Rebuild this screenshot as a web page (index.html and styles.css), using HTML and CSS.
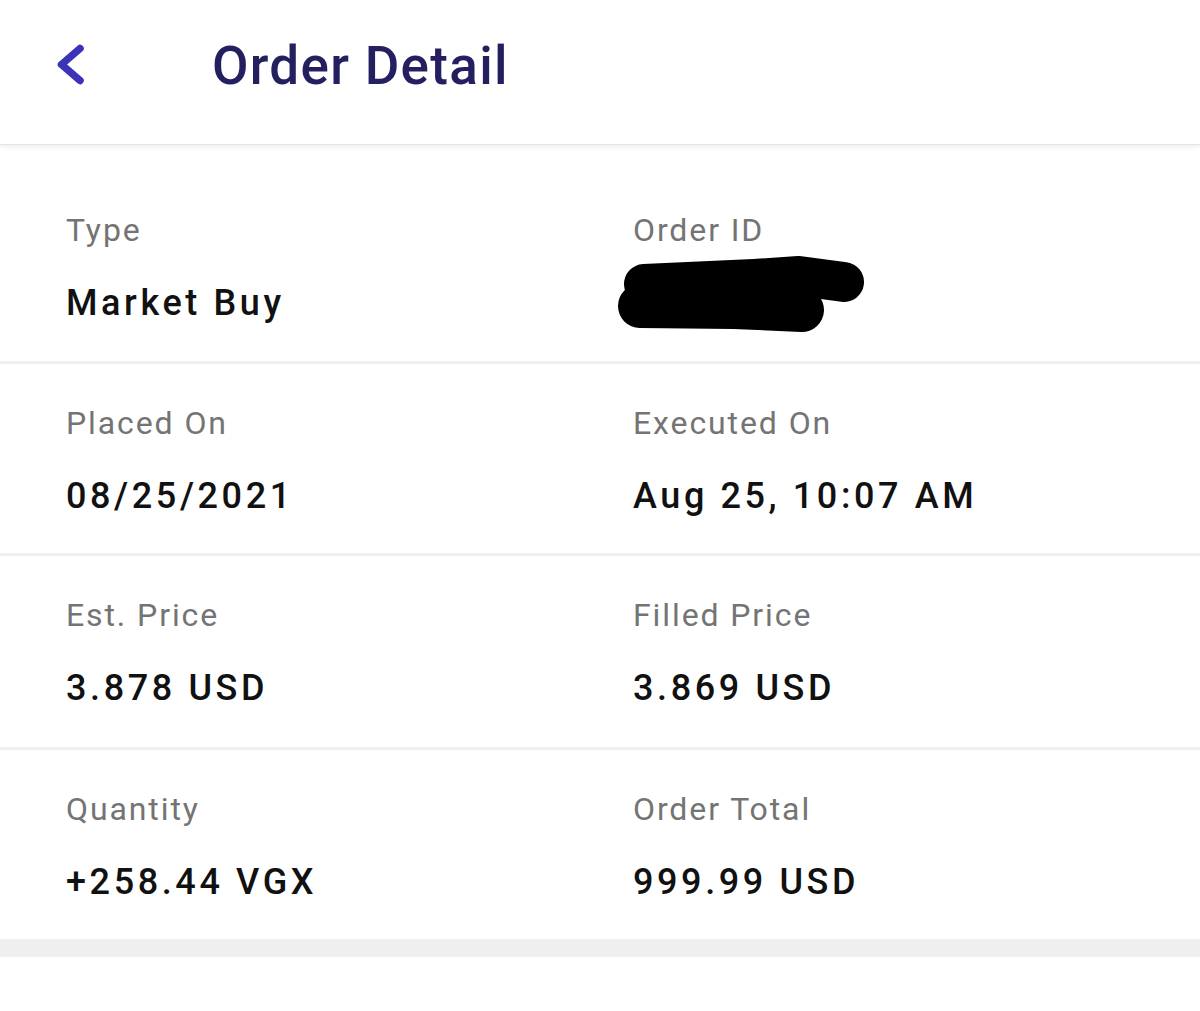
FILE: index.html
```html
<!DOCTYPE html>
<html lang="en">
<head>
<meta charset="utf-8">
<title>Order Detail</title>
<link rel="stylesheet" href="styles.css">
</head>
<body>
<header class="topbar">
  <svg class="back" width="28" height="41" viewBox="0 0 28 41" aria-hidden="true">
    <path d="M23 4.5 L4.5 20.5 L23 36.5" fill="none" stroke="#3b34b8" stroke-width="7.5" stroke-linecap="round" stroke-linejoin="round"/>
  </svg>
  <h1 class="title">Order Detail</h1>
</header>
<main class="details">
  <section class="row row-first">
    <div class="cell">
      <div class="label">Type</div>
      <div class="value">Market Buy</div>
    </div>
    <div class="cell">
      <div class="label">Order ID</div>
      <div class="value redacted">
        <svg class="blob" width="255" height="80" viewBox="0 0 255 80" aria-hidden="true">
          <path d="M30 30 L140 25 L185 22 L230 28" fill="none" stroke="#000" stroke-width="40" stroke-linecap="round" stroke-linejoin="round"/>
          <path d="M26 52 L120 53 L188 56" fill="none" stroke="#000" stroke-width="44" stroke-linecap="round" stroke-linejoin="round"/>
        </svg>
      </div>
    </div>
  </section>
  <section class="row">
    <div class="cell">
      <div class="label">Placed On</div>
      <div class="value">08/25/2021</div>
    </div>
    <div class="cell">
      <div class="label">Executed On</div>
      <div class="value">Aug 25, 10:07 AM</div>
    </div>
  </section>
  <section class="row row-third">
    <div class="cell">
      <div class="label">Est. Price</div>
      <div class="value">3.878 USD</div>
    </div>
    <div class="cell">
      <div class="label">Filled Price</div>
      <div class="value">3.869 USD</div>
    </div>
  </section>
  <section class="row row-last">
    <div class="cell">
      <div class="label">Quantity</div>
      <div class="value">+258.44 VGX</div>
    </div>
    <div class="cell">
      <div class="label">Order Total</div>
      <div class="value">999.99 USD</div>
    </div>
  </section>
  <div class="band"></div>
</main>
</body>
</html>
```

FILE: styles.css
```css
* { box-sizing: border-box; }

html, body {
  margin: 0;
  padding: 0;
  background: #ffffff;
  font-family: Roboto, "Noto Sans", "Liberation Sans", sans-serif;
}

.topbar {
  height: 145px;
  display: flex;
  align-items: flex-start;
  padding: 36px 0 0 57px;
  background: #ffffff;
  border-bottom: 1px solid #e4e4e4;
  box-shadow: 0 2px 5px rgba(0, 0, 0, 0.07);
  position: relative;
  z-index: 1;
}

.back {
  display: block;
  margin-top: 8px;
  flex: none;
}

.title {
  margin: 0 0 0 127px;
  font-size: 53px;
  line-height: 60px;
  font-weight: 500;
  letter-spacing: 1.3px;
  color: #241f5e;
}

.details {
  display: flex;
  flex-direction: column;
}

.row {
  display: grid;
  grid-template-columns: 567px 1fr;
  padding: 39px 0 35px 66px;
  border-bottom: 3px solid #efefef;
}

.row-first {
  padding-top: 65px;
  padding-bottom: 36px;
}

.row-third {
  padding-bottom: 37px;
}

.row-last {
  border-bottom: none;
  padding-bottom: 35px;
}

.cell {
  display: flex;
  flex-direction: column;
}

.label {
  font-size: 32px;
  line-height: 40px;
  font-weight: 400;
  letter-spacing: 1.9px;
  color: #747474;
}

.value {
  margin-top: 31px;
  font-size: 36px;
  line-height: 44px;
  font-weight: 500;
  letter-spacing: 3.6px;
  color: #111111;
}

.redacted {
  height: 44px;
}

.blob {
  display: block;
  margin: -27px 0 0 -19px;
}

.band {
  height: 18px;
  background: #efefef;
}
```
